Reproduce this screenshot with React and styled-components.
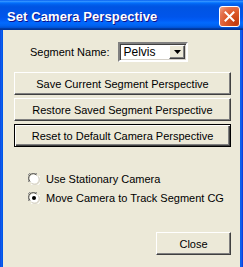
import styled, { createGlobalStyle } from 'styled-components'

const GlobalStyle = createGlobalStyle`
  html, body {
    margin: 0;
    padding: 0;
    background: #ece9d8;
  }
`

const Window = styled.div`
  width: 243px;
  height: 267px;
  display: flex;
  flex-direction: column;
  background: linear-gradient(to right, #0831d9 0, #166aee 1px, #0055ea 2px, #0055ea 240px, #166aee 241px, #0831d9 243px);
  font-family: 'Liberation Sans', Arial, sans-serif;
  font-size: 11px;
  overflow: hidden;
`

const Titlebar = styled.div`
  height: 30px;
  flex: none;
  display: flex;
  align-items: center;
  justify-content: space-between;
  padding: 0 3px 0 7px;
  background: linear-gradient(
    180deg,
    #0058ee 0%,
    #3593ff 4%,
    #288eff 6%,
    #127dff 8%,
    #036ffc 10%,
    #0262ee 14%,
    #0057e5 20%,
    #0054e3 24%,
    #0055eb 56%,
    #005bf5 66%,
    #026afe 76%,
    #0062ef 86%,
    #0052d6 92%,
    #0040ab 94%,
    #003092 100%
  );
`

const Title = styled.span`
  color: white;
  font-family: 'Liberation Sans', Arial, sans-serif;
  font-weight: bold;
  font-size: 13px;
  letter-spacing: 0.1px;
  text-shadow: 1px 1px #0f1089;
  padding-top: 2px;
  white-space: nowrap;
`

const CloseBox = styled.div`
  width: 21px;
  height: 21px;
  box-sizing: border-box;
  border: 1px solid #fff;
  border-radius: 3px;
  background: radial-gradient(circle at 85% 85%, #c23b0c 0%, #dd5a2b 50%, #e47250 75%, #f0a88c 100%);
  display: flex;
  align-items: center;
  justify-content: center;
  margin-top: 3px;
`

const Body = styled.div`
  flex: 1;
  margin: 0 3px;
  background: #ece9d8;
  padding: 12px 9px 0 11px;
  display: flex;
  flex-direction: column;
`

const SegmentRow = styled.div`
  display: flex;
  align-items: center;
  height: 20px;
  padding-left: 16px;
  gap: 9px;
`

const Label = styled.span`
  color: #000;
  white-space: nowrap;
`

const Select = styled.div`
  width: 70px;
  height: 20px;
  box-sizing: border-box;
  display: flex;
  align-items: center;
  background: #fff;
  border-style: solid;
  border-width: 2px;
  border-color: #808080 #fff #fff #808080;
  box-shadow: inset 1px 1px #404040, inset -1px -1px #d4d0c8;
`

const SelectText = styled.span`
  flex: 1;
  padding-left: 3px;
  color: #000;
  font-size: 12px;
`

const Arrow = styled.div`
  width: 16px;
  height: 14px;
  box-sizing: border-box;
  margin-right: 1px;
  background: #ece9d8;
  border-style: solid;
  border-width: 1px;
  border-color: #fff #404040 #404040 #fff;
  box-shadow: inset -1px -1px #808080;
  display: flex;
  align-items: center;
  justify-content: center;
`

const ButtonStack = styled.div`
  display: flex;
  flex-direction: column;
  gap: 3px;
  margin-top: 10px;
`

const Button = styled.div`
  width: ${p => p.$width || 217}px;
  height: 23px;
  box-sizing: border-box;
  display: flex;
  align-items: center;
  justify-content: center;
  background: #ece9d8;
  color: #000;
  font-size: 11px;
  white-space: nowrap;
  border-style: solid;
  border-width: 1px;
  border-color: ${p => (p.$default ? '#000' : '#fff #404040 #404040 #fff')};
  box-shadow: ${p =>
    p.$default
      ? 'inset 1px 1px #fff, inset -1px -1px #404040, inset -2px -2px #808080'
      : 'inset -1px -1px #808080'};
`

const RadioGroup = styled.div`
  display: flex;
  flex-direction: column;
  gap: 6px;
  margin-top: 25px;
  padding-left: 14px;
`

const RadioRow = styled.label`
  display: flex;
  align-items: center;
  gap: 6px;
  height: 13px;
  color: #000;
  font-size: 11px;
  white-space: nowrap;
`

const Footer = styled.div`
  display: flex;
  justify-content: flex-end;
  margin-top: 28px;
`

const Radio = ({ checked }) => (
  <svg width="12" height="12" viewBox="0 0 12 12">
    <path d="M1 9 A5.5 5.5 0 0 1 9 1" stroke="#808080" strokeWidth="1" fill="none" />
    <path d="M11 3 A5.5 5.5 0 0 1 3 11" stroke="#fff" strokeWidth="1" fill="none" />
    <circle cx="6" cy="6" r="4.6" fill="#fff" />
    <path d="M2 8.5 A4.5 4.5 0 0 1 8.5 2" stroke="#404040" strokeWidth="1" fill="none" />
    <path d="M10 3.5 A4.5 4.5 0 0 1 3.5 10" stroke="#d4d0c8" strokeWidth="1" fill="none" />
    {checked && <circle cx="6" cy="6" r="2" fill="#000" />}
  </svg>
)

export default function App() {
  return (
    <>
      <GlobalStyle />
      <Window>
        <Titlebar>
          <Title>Set Camera Perspective</Title>
          <CloseBox>
            <svg width="11" height="11" viewBox="0 0 11 11">
              <path d="M1.5 1.5 L9.5 9.5 M9.5 1.5 L1.5 9.5" stroke="#fff" strokeWidth="2" strokeLinecap="square" />
            </svg>
          </CloseBox>
        </Titlebar>
        <Body>
          <SegmentRow>
            <Label>Segment Name:</Label>
            <Select>
              <SelectText>Pelvis</SelectText>
              <Arrow>
                <svg width="7" height="4" viewBox="0 0 7 4">
                  <path d="M0 0 H7 L3.5 4 Z" fill="#000" />
                </svg>
              </Arrow>
            </Select>
          </SegmentRow>
          <ButtonStack>
            <Button>Save Current Segment Perspective</Button>
            <Button>Restore Saved Segment Perspective</Button>
            <Button $default>Reset to Default Camera Perspective</Button>
          </ButtonStack>
          <RadioGroup>
            <RadioRow>
              <Radio />
              Use Stationary Camera
            </RadioRow>
            <RadioRow>
              <Radio checked />
              Move Camera to Track Segment CG
            </RadioRow>
          </RadioGroup>
          <Footer>
            <Button $width={75}>Close</Button>
          </Footer>
        </Body>
      </Window>
    </>
  )
}
